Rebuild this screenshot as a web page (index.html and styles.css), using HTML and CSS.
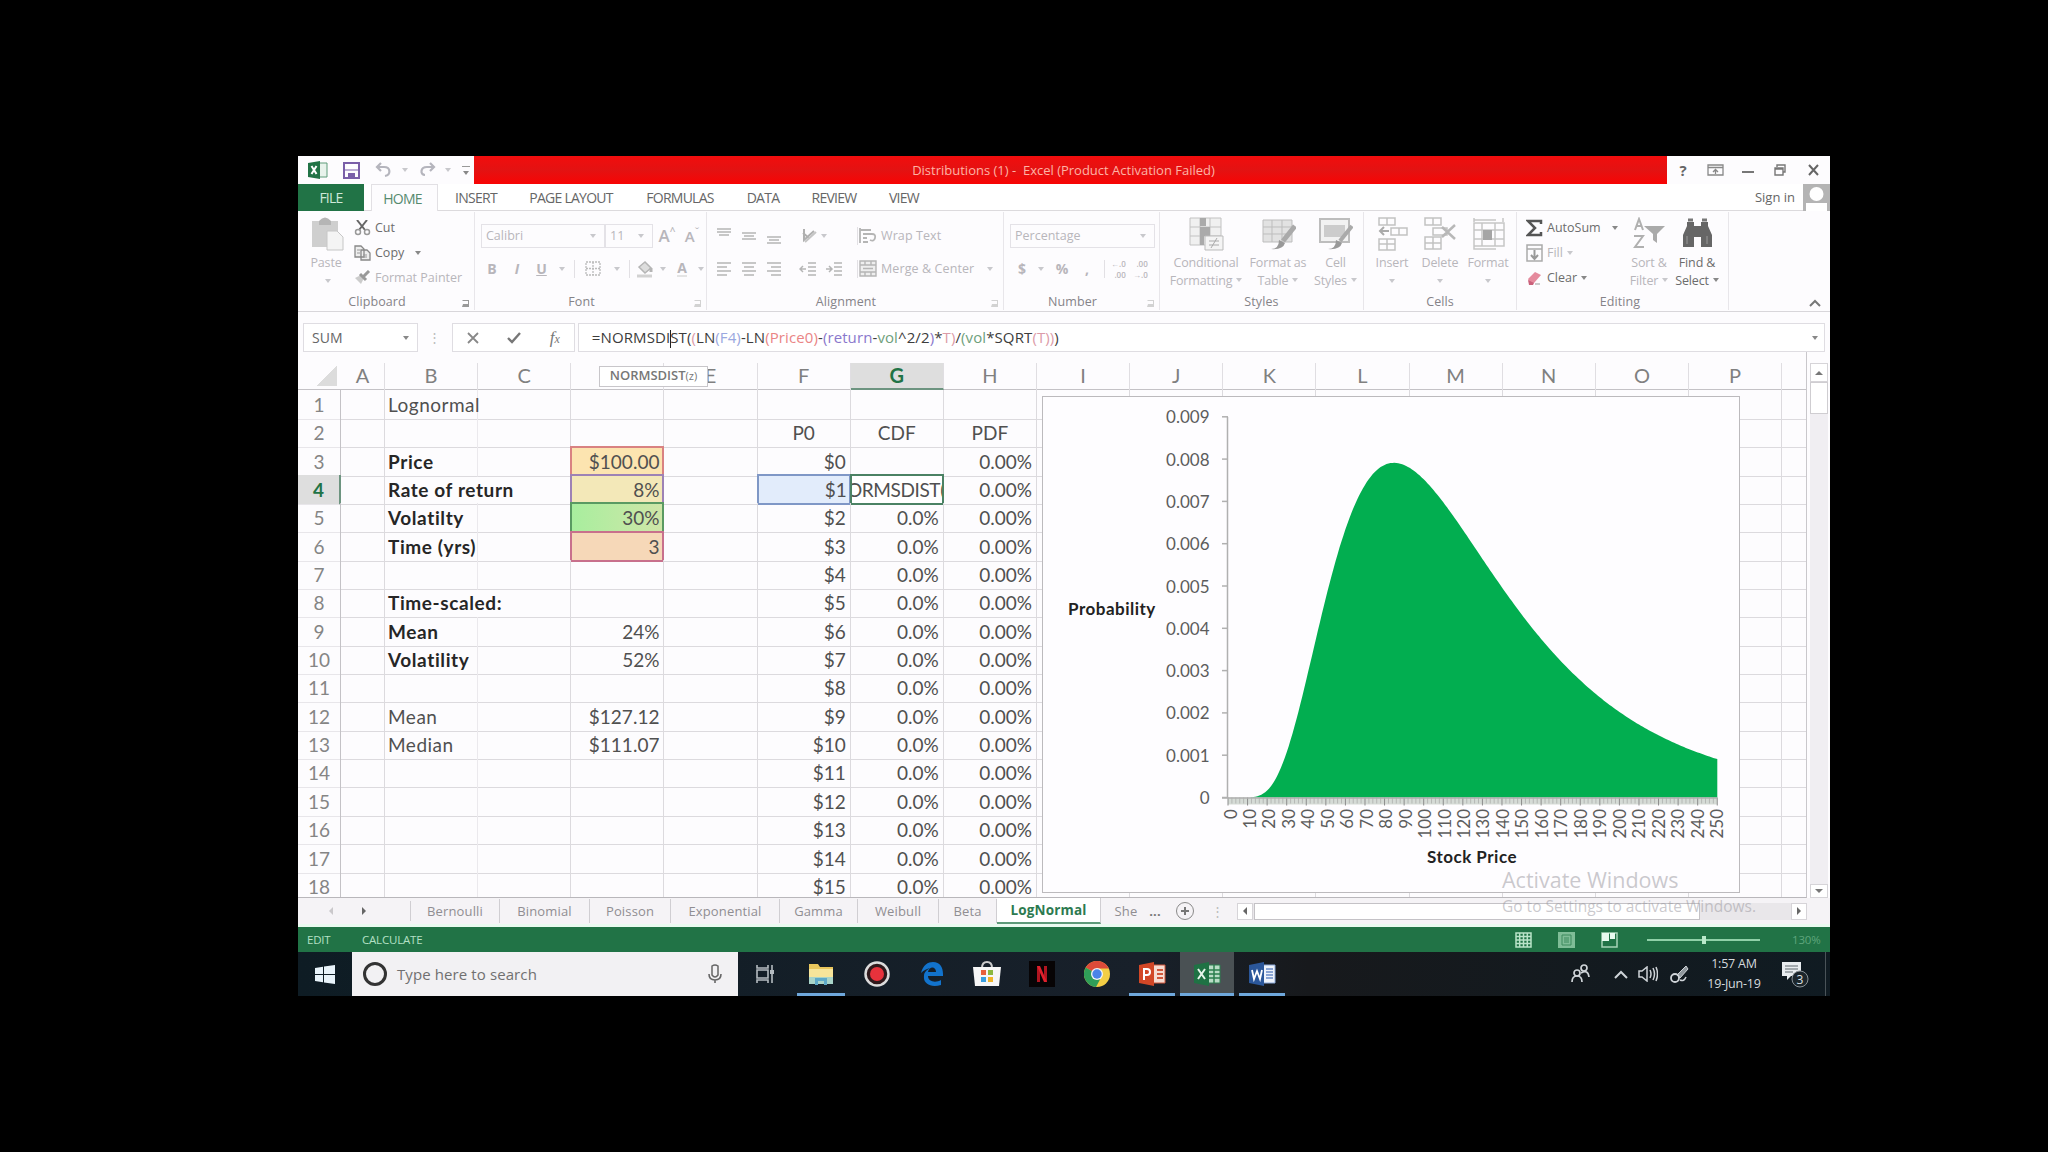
FILE: index.html
```html
<!DOCTYPE html>
<html lang="en">
<head>
    <meta charset="UTF-8">
    <title>Distributions (1) - Excel</title>
    <link rel="stylesheet" href="styles.css">
</head>
<body>

<div class="window">

    <div class="titlebar">
        <div class="quick">
            <svg width="20" height="18" viewBox="0 0 20 18"><path d="M12 2h7v14h-7" fill="#e8f3ec" stroke="#5f9c7b"/><path d="M0 2l12-2v18L0 16z" fill="#217346"/><path d="M3.500 5l5 8M8.500 5l-5 8" stroke="#fff" stroke-width="2"/></svg>
            <svg width="17" height="17" viewBox="0 0 17 17"><path d="M1 1h15v15H1z" fill="none" stroke="#7a5fa8" stroke-width="2"/><path d="M4 2h9v5H4z" fill="#fff"/><path d="M1 8h15" stroke="#7a5fa8"/><path d="M5 11h7v5H5z" fill="#7a5fa8"/></svg>
            <svg width="17" height="16" viewBox="0 0 17 16"><path d="M6 1L2 5l4 4M2 5h7c7 0 7 8 1 9" fill="none" stroke="#b5b5bd" stroke-width="2.200"/></svg>
            <i class="arrow pale"></i>
            <svg width="17" height="16" viewBox="0 0 17 16"><path d="M11 1l4 4-4 4M15 5H8c-7 0-7 8-2 8" fill="none" stroke="#b5b5bd" stroke-width="2.200"/></svg>
            <i class="arrow pale"></i>
            <span class="customize"><i class="arrow"></i></span>
        </div>
        <div class="title">Distributions (1) -&nbsp; Excel (Product Activation Failed)</div>
        <div class="controls">
            <b>?</b>
            <svg width="17" height="12" viewBox="0 0 17 12"><path d="M1 1h15v10H1zM1 3.500h15M8.500 10V5.500M6 8l2.500-2.500L11 8" fill="none" stroke="#888" stroke-width="1.300"/></svg>
            <svg width="12" height="12" viewBox="0 0 12 12"><path d="M0 8h12" stroke="#777" stroke-width="2"/></svg>
            <svg width="12" height="12" viewBox="0 0 12 12"><path d="M3 3V1h8v7H9M1 4h8v7H1zM1 5h8" fill="none" stroke="#777" stroke-width="1.400"/></svg>
            <svg width="11" height="12" viewBox="0 0 11 12"><path d="M1 1l9 10M10 1L1 11" stroke="#666" stroke-width="2"/></svg>
        </div>
    </div>

    <div class="menu">
        <span class="file">FILE</span>
        <span class="home">HOME</span>
        <span>INSERT</span>
        <span>PAGE LAYOUT</span>
        <span>FORMULAS</span>
        <span>DATA</span>
        <span>REVIEW</span>
        <span>VIEW</span>
        <span class="signin">Sign in</span>
        <svg class="avatar" width="27" height="27" viewBox="0 0 27 27"><path d="M0 0h27v27H0z" fill="#b4b4b4"/><circle cx="13.500" cy="10" r="7" fill="#fff"/><path d="M3 27v-8h21v8z" fill="#fff"/></svg>
    </div>

    <div class="ribbon">
        <div class="group clipboard">
            <div class="tools">
                <div class="big">
                    <svg width="33" height="34" viewBox="0 0 33 34"><path d="M1 4h26v26H1z" fill="#cfcfcf"/><path d="M8 4q6-7 12 0v4H8z" fill="#b5b5b5"/><path d="M16 14h10l6 6v13H16z" fill="#f4f4f4" stroke="#c6c6c6"/></svg>
                    <span>Paste</span><i class="arrow pale"></i>
                </div>
                <div class="stack">
                    <div class="dark"><svg width="17" height="16" viewBox="0 0 17 16"><path d="M3 0l8 10M13 0L5 10" stroke="#666" stroke-width="2"/><circle cx="4" cy="12" r="2.500" fill="none" stroke="#999" stroke-width="1.500"/><circle cx="13" cy="12" r="2.500" fill="none" stroke="#999" stroke-width="1.500"/></svg>Cut</div>
                    <div class="dark"><svg width="17" height="16" viewBox="0 0 17 16"><path d="M1 1h6l3 3v8H1zM7 5h6l3 3v7H7z" fill="#eee" stroke="#888" stroke-width="1.300"/><path d="M3 5h3M3 8h3M9 10h4M9 12h4" stroke="#999"/></svg>Copy<i class="arrow"></i></div>
                    <div><svg width="17" height="16" viewBox="0 0 17 16"><path d="M1 8l6 6 3-6-3-3z" fill="#ccc"/><path d="M8 8l7-7M6 4l6 6" stroke="#999" stroke-width="3"/></svg>Format Painter</div>
                </div>
            </div>
            <div class="name">Clipboard<i class="launch"></i></div>
        </div>

        <div class="group font">
            <div class="tools rows">
                <div class="line font-top">
                    <div class="combo">Calibri<i class="arrow pale"></i></div>
                    <div class="combo">11<i class="arrow pale"></i></div>
                    <span class="grow">A<sup>^</sup></span>
                    <span class="grow small">A<sup>&#711;</sup></span>
                </div>
                <div class="line font-bottom">
                    <b>B</b><b><em>I</em></b><b class="under">U</b><i class="arrow pale"></i><i class="sep"></i>
                    <svg width="16" height="15" viewBox="0 0 16 15"><path d="M1 1h14v13H1zM8 1v13M1 7.500h14" fill="none" stroke="#bbb" stroke-width="1.300" stroke-dasharray="2 1"/></svg>
                    <i class="arrow pale"></i><i class="sep"></i>
                    <svg width="18" height="18" viewBox="0 0 18 18"><path d="M3 7l6-5 6 6-6 5z" fill="#ddd" stroke="#b5b5b5" stroke-width="1.500"/><path d="M15 8v4" stroke="#b5b5b5" stroke-width="3"/><path d="M1 16h15" stroke="#d2d2d2" stroke-width="3"/></svg>
                    <i class="arrow pale"></i><b class="letter">A</b><i class="arrow pale"></i>
                </div>
            </div>
            <div class="name">Font<i class="launch pale"></i></div>
        </div>

        <div class="group alignment">
            <div class="tools rows">
                <div class="line align-top">
                    <svg width="16" height="16" viewBox="0 0 16 16"><path d="M1 1h14M1 4h14M3 7h10" stroke="#b5b5b5" stroke-width="1.500"/></svg>
                    <svg width="16" height="16" viewBox="0 0 16 16"><path d="M1 5h14M3 8h10M1 11h14" stroke="#b5b5b5" stroke-width="1.500"/></svg>
                    <svg width="16" height="16" viewBox="0 0 16 16"><path d="M1 9h14M3 12h10M1 15h14" stroke="#b5b5b5" stroke-width="1.500"/></svg>
                    <svg class="orient" width="17" height="17" viewBox="0 0 17 17"><path d="M3 2v11l10-9M2 6l6 5" fill="none" stroke="#b0b0b0" stroke-width="2"/><path d="M4 15L15 5" stroke="#c5c5c5" stroke-width="2"/></svg>
                    <i class="arrow pale"></i><i class="sep"></i>
                    <svg width="18" height="17" viewBox="0 0 18 17"><path d="M1 1v15M1 3h11M4 7h9q4 0 3 4t-5 2M4 11h4M4 15h5" fill="none" stroke="#b5b5b5" stroke-width="1.800"/></svg>
                    <span>Wrap Text</span>
                </div>
                <div class="line align-bottom">
                    <svg width="16" height="14" viewBox="0 0 16 14"><path d="M1 1h14M1 5h10M1 9h14M1 13h10" stroke="#b5b5b5" stroke-width="1.500"/></svg>
                    <svg width="16" height="14" viewBox="0 0 16 14"><path d="M1 1h14M3 5h10M1 9h14M3 13h10" stroke="#b5b5b5" stroke-width="1.500"/></svg>
                    <svg width="16" height="14" viewBox="0 0 16 14"><path d="M1 1h14M5 5h10M1 9h14M5 13h10" stroke="#b5b5b5" stroke-width="1.500"/></svg>
                    <svg width="18" height="14" viewBox="0 0 18 14"><path d="M1 7h6M4 4L1 7l3 3M9 1h8M9 5h8M9 9h8M9 13h8" fill="none" stroke="#b5b5b5" stroke-width="1.500"/></svg>
                    <svg width="18" height="14" viewBox="0 0 18 14"><path d="M1 7h6M4 4l3 3-3 3M9 1h8M9 5h8M9 9h8M9 13h8" fill="none" stroke="#b5b5b5" stroke-width="1.500"/></svg>
                    <i class="sep"></i>
                    <svg width="18" height="17" viewBox="0 0 18 17"><path d="M1 1h16v15H1zM1 5h16M1 12h16M6 1v4M12 1v4M6 12v4M12 12v4M4 8.500h10" fill="#eee" stroke="#b5b5b5" stroke-width="1.400"/></svg>
                    <span>Merge &amp; Center</span><i class="arrow pale"></i>
                </div>
            </div>
            <div class="name">Alignment<i class="launch pale"></i></div>
        </div>

        <div class="group number">
            <div class="tools rows">
                <div class="line number-top"><div class="combo">Percentage<i class="arrow pale"></i></div></div>
                <div class="line number-bottom">
                    <b>$</b><i class="arrow pale"></i><b>%</b><b>,</b><i class="sep"></i>
                    <span class="decimals"><i>&#8592;.0</i><i>.00</i></span><span class="decimals"><i>.00</i><i>&#8594;.0</i></span>
                </div>
            </div>
            <div class="name">Number<i class="launch pale"></i></div>
        </div>

        <div class="group styles">
            <div class="tools">
                <div class="big">
                    <svg width="35" height="34" viewBox="0 0 35 34"><path d="M1 1h31v27H1zM11 1v27M21 1v27M1 10h31M1 19h31" fill="#f0f0f0" stroke="#c2c2c2"/><path d="M11 1h6v8h-6zM11 10h10v9H11zM11 19h4v9h-4z" fill="#aaa"/><path d="M16 19h18v14H16z" fill="#f4f4f4" stroke="#bbb"/><path d="M20 24h10M20 28h10M28 21l-6 10" stroke="#aaa"/></svg>
                    <span>Conditional</span><span>Formatting<i class="arrow pale"></i></span>
                </div>
                <div class="big">
                    <svg width="35" height="34" viewBox="0 0 35 34"><path d="M2 3h29v22H2zM2 10h29M2 17h29M11 3v22M21 3v22" fill="#e2e2e2" stroke="#bdbdbd"/><path d="M34 9L22 24" stroke="#aaa" stroke-width="5"/><path d="M10 32q8 0 8-9l6 3q-2 7-14 6" fill="#999"/></svg>
                    <span>Format as</span><span>Table<i class="arrow pale"></i></span>
                </div>
                <div class="big">
                    <svg width="35" height="34" viewBox="0 0 35 34"><path d="M2 2h29v23H2z" fill="#f2f2f2" stroke="#bdbdbd" stroke-width="2"/><path d="M6 8h21v12H6z" fill="#ccc"/><path d="M34 9L22 24" stroke="#aaa" stroke-width="4"/><path d="M10 32q8 0 8-9l6 3q-2 7-14 6" fill="#999"/></svg>
                    <span>Cell</span><span>Styles<i class="arrow pale"></i></span>
                </div>
            </div>
            <div class="name">Styles</div>
        </div>

        <div class="group cells">
            <div class="tools">
                <div class="big">
                    <svg width="32" height="34" viewBox="0 0 32 34"><path d="M3 1h16v7H3zM11 1v7M3 22h16v11H3zM11 22v11M3 27h16M15 11h16v7H15zM23 11v7" fill="none" stroke="#c2c2c2" stroke-width="1.500"/><path d="M13 14H4M8 10l-4 4 4 4" fill="none" stroke="#aaa" stroke-width="2"/></svg>
                    <span>Insert</span><i class="arrow pale"></i>
                </div>
                <div class="big">
                    <svg width="34" height="34" viewBox="0 0 34 34"><path d="M2 1h16v7H2zM10 1v7M2 20h16v12H2zM10 20v12M2 26h16M10 11h14v7H10z" fill="none" stroke="#c2c2c2" stroke-width="1.500"/><path d="M19 10l13 12M32 8L19 20" stroke="#b8b8b8" stroke-width="2.500"/></svg>
                    <span>Delete</span><i class="arrow pale"></i>
                </div>
                <div class="big">
                    <svg width="33" height="34" viewBox="0 0 33 34"><path d="M2 1v4M31 1v4M2 3h22M2 6h30v23H2zM2 6v26h22M10 6v23M23 6v23M2 13h30M2 22h30" fill="none" stroke="#c6c6c6" stroke-width="1.500"/><path d="M11 13h9v10h-9z" fill="#a5a5a5"/></svg>
                    <span>Format</span><i class="arrow pale"></i>
                </div>
            </div>
            <div class="name">Cells</div>
        </div>

        <div class="group editing">
            <div class="tools">
                <div class="stack">
                    <div class="dark"><svg width="17" height="18" viewBox="0 0 17 18"><path d="M15 5V2H2l7 7-7 7h13v-3" fill="none" stroke="#555" stroke-width="2.500"/></svg>AutoSum<i class="arrow"></i></div>
                    <div><svg width="17" height="18" viewBox="0 0 17 18"><path d="M1 1h15v16H1zM1 5h15" fill="none" stroke="#aaa" stroke-width="1.500"/><path d="M8.500 6v8M5 11l3.500 4 3.500-4" fill="none" stroke="#999" stroke-width="2"/></svg>Fill<i class="arrow pale"></i></div>
                    <div class="dark"><svg width="17" height="16" viewBox="0 0 17 16"><path d="M2 9l7-7 6 3-7 8H4z" fill="#e58a9d"/><path d="M2 10l6 3-1 2H3z" fill="#c9607a"/><path d="M9 14h5" stroke="#999"/></svg>Clear<i class="arrow"></i></div>
                </div>
                <div class="big">
                    <svg width="34" height="34" viewBox="0 0 34 34"><path d="M3 13L7 2l4 11M4 9h6M2 19h9L3 30h9" fill="none" stroke="#b0b0b0" stroke-width="2"/><path d="M12 9h21l-8 8v9l-4-3v-6z" fill="#aaa"/></svg>
                    <span>Sort &amp;</span><span>Filter<i class="arrow pale"></i></span>
                </div>
                <div class="big dark">
                    <svg width="31" height="34" viewBox="0 0 31 34"><path d="M5 5h7v4h7V5h7v4l4 9v12H19V20h-7v10H1V18l4-9z" fill="#666"/><path d="M6 3h5M20 3h5" stroke="#777" stroke-width="3"/><path d="M5 19v8M25 19v8" stroke="#999"/></svg>
                    <span>Find &amp;</span><span>Select<i class="arrow"></i></span>
                </div>
            </div>
            <div class="name">Editing</div>
        </div>
        <svg class="collapse" width="12" height="8" viewBox="0 0 12 8"><path d="M1 7l5-5 5 5" fill="none" stroke="#777" stroke-width="2"/></svg>
    </div>

    <div class="formula-bar">
        <div class="box name-box">SUM<i class="arrow"></i></div>
        <span class="dots">&#8942;</span>
        <div class="box buttons">
            <svg width="12" height="12" viewBox="0 0 12 12"><path d="M1 1l10 10M11 1L1 11" stroke="#888" stroke-width="1.800"/></svg>
            <svg width="14" height="12" viewBox="0 0 14 12"><path d="M1 6l4 4 8-9" fill="none" stroke="#777" stroke-width="2.400"/></svg>
            <em>f<small>x</small></em>
        </div>
        <div class="box formula"><div class="text">=NORMSDI<i class="caret"></i>ST(<span class="pink">(</span>LN<span class="blue">(F4)</span>-LN<span class="red">(Price0)</span>-<span class="violet">(return</span>-<span class="green">vol</span>^2/2<span class="violet">)</span>*<span class="pink">T)</span>/<span class="green">(vol</span>*SQRT<span class="pink">(T))</span>)</div><i class="arrow"></i></div>
    </div>

    <div class="sheet">
        <div class="grid">
            <div class="columns" id="columns"></div>
            <div id="rows"></div>
            <div class="hint"><b>NORMSDIST</b>(z)</div>
            <svg class="chart" id="chart" width="698" height="497" viewBox="1042 396 698 497"></svg>
        </div>
        <div class="vscroll">
            <div class="step up"><i></i></div>
            <div class="thumb"></div>
            <div class="track"></div>
            <div class="step down"><i></i></div>
        </div>
    </div>

    <div class="tabs">
        <div class="nav"><i class="left"></i><i class="right"></i></div>
        <span>Bernoulli</span><span>Binomial</span><span>Poisson</span><span>Exponential</span>
        <span>Gamma</span><span>Weibull</span><span>Beta</span><span class="active">LogNormal</span>
        <span class="cut">She</span><b class="more">...</b>
        <svg width="20" height="20" viewBox="0 0 20 20"><circle cx="10" cy="10" r="8.500" fill="none" stroke="#8a8a8a"/><path d="M10 6v8M6 10h8" stroke="#777" stroke-width="2"/></svg>
        <span class="grip">&#8942;</span>
        <div class="hscroll">
            <div class="step"><i class="left"></i></div>
            <div class="thumb"></div>
            <div class="track"></div>
            <div class="step"><i class="right"></i></div>
        </div>
    </div>

    <div class="status">
        <span>EDIT</span><span>CALCULATE</span>
        <div class="views">
            <svg width="17" height="16" viewBox="0 0 17 16"><path d="M1 1h15v14H1zM4.700 1v14M8.500 1v14M12.300 1v14M1 4.500h15M1 8h15M1 11.500h15" fill="none" stroke="#b9e3c8" stroke-width="1.500"/></svg>
            <svg width="17" height="16" viewBox="0 0 17 16"><path d="M0 0h17v16H0z" fill="#7fbd97"/><path d="M4 3h9v10H4zM6 6h5M6 8h5M6 10h5" fill="none" stroke="#3c8a5c"/></svg>
            <svg width="17" height="16" viewBox="0 0 17 16"><path d="M1 1h15v14H1z" fill="none" stroke="#a6d4b7" stroke-width="1.500"/><path d="M1 1h7v8H1zM9 1h5v6H9z" fill="#e8fbef"/></svg>
        </div>
        <div class="zoom"><i></i></div>
        <span class="percent">130%</span>
    </div>

    <div class="taskbar">
        <div class="start"><svg width="20" height="19" viewBox="0 0 20 19"><path d="M0 3l8-1.200V9H0zM9 1.600L20 0v9H9zM0 10h8v7.200L0 16zM9 10h11v9L9 17.400z" fill="#e8f3fa"/></svg></div>
        <div class="search">
            <i class="cortana"></i>Type here to search
            <svg width="14" height="20" viewBox="0 0 14 20"><path d="M4 2q3-2 6 0v9q-3 4-6 0z" fill="none" stroke="#666" stroke-width="1.500"/><path d="M1 10q0 6 6 6t6-6M7 16v3" fill="none" stroke="#666" stroke-width="1.600"/></svg>
        </div>
        <div class="app"><svg width="20" height="18" viewBox="0 0 20 18"><path d="M2 5h11v8H2zM2 0v3h11V0M2 18v-3h11v3M17 0v5M17 9v9" fill="none" stroke="#b4bbc0" stroke-width="1.600"/><path d="M15 5h4v4h-4z" fill="#b4bbc0"/></svg></div>
        <div class="app open"><svg width="26" height="22" viewBox="0 0 26 22"><path d="M1 1h9l2 3h13v17H1z" fill="#e9c65c"/><path d="M1 6h24v15H1z" fill="#f7e59a"/><path d="M1 14h24v7H1z" fill="#a9d4c8"/><path d="M7 22v-7h12v7h-3v-4h-6v4z" fill="#5ea9c8"/></svg></div>
        <div class="app"><svg width="26" height="26" viewBox="0 0 26 26"><circle cx="13" cy="13" r="11.500" fill="#301a1c" stroke="#dcdcdc" stroke-width="2.500"/><circle cx="13" cy="13" r="7" fill="#e8323c"/></svg></div>
        <div class="app"><svg width="24" height="24" viewBox="0 0 24 24"><path d="M1 11C3 3 8 0 13 0c7 0 10 5 10 12v2H8c0 6 8 7 13 4v5C11 26 3 22 4 14c0-4 3-6 6-8-3 1-6 2-9 5zM8 10h8c0-6-7-6-8 0z" fill="#1273cc" fill-rule="evenodd"/></svg></div>
        <div class="app"><svg width="28" height="28" viewBox="0 0 28 28"><path d="M9 8q0-6 5-6t5 6" fill="none" stroke="#ccc" stroke-width="2"/><path d="M0 7h28l-2 19H2z" fill="#f6f6f6"/><path d="M8 10h5v5H8z" fill="#e8603c"/><path d="M15 10h5v5h-5z" fill="#8bb83f"/><path d="M8 17h5v5H8z" fill="#3a9fe0"/><path d="M15 17h5v5h-5z" fill="#f0b429"/></svg></div>
        <div class="app"><svg width="26" height="26" viewBox="0 0 26 26"><path d="M0 0h26v26H0z" fill="#070405"/><path d="M8 5h3v16H8zM15 5h3v16h-3z" fill="#b01520"/><path d="M8 5h3l7 16h-3z" fill="#e0202c"/></svg></div>
        <div class="app"><svg width="26" height="26" viewBox="0 0 26 26"><circle cx="13" cy="13" r="13" fill="#f3ce45"/><path d="M13 13L1.700 6.500A13 13 0 0 1 24.300 6.500L25 7.500H13z" fill="#dd4b3a"/><path d="M13 13L1.700 6.500A13 13 0 0 0 12 26l4-7.500z" fill="#2f9e58"/><circle cx="13" cy="13" r="6" fill="#f4f4f4"/><circle cx="13" cy="13" r="4.700" fill="#4a84e8"/></svg></div>
        <div class="app open"><svg width="27" height="24" viewBox="0 0 27 24"><path d="M14 3h12v18H14z" fill="#f6dcd2" stroke="#d0573a"/><path d="M18 8h6M18 12h6M18 16h6" stroke="#d0573a" stroke-width="2"/><path d="M0 3l15-3v24L0 21z" fill="#d24726"/><path d="M5 18V7h3q3 0 3 3t-3 3H5" fill="none" stroke="#fff" stroke-width="2"/></svg></div>
        <div class="app open current"><svg width="27" height="24" viewBox="0 0 27 24"><path d="M14 3h12v18H14z" fill="#b9dcc6" stroke="#2b7e4e"/><path d="M15 8h11M15 12h11M15 16h11M20 3v18" stroke="#2b7e4e" stroke-width="1.500"/><path d="M0 3l15-3v24L0 21z" fill="#1f7244"/><path d="M4 7l7 10M11 7L4 17" stroke="#e8f5ec" stroke-width="2"/></svg></div>
        <div class="app open"><svg width="27" height="24" viewBox="0 0 27 24"><path d="M14 3h12v18H14z" fill="#eef3fb" stroke="#8aa8d8"/><path d="M17 7h7M17 10h7M17 13h7M17 16h7" stroke="#6a8cc8" stroke-width="1.300"/><path d="M0 3l15-3v24L0 21z" fill="#2b579a"/><path d="M3 8l2 9 3-8 3 8 2-9" fill="none" stroke="#fff" stroke-width="1.800"/></svg></div>
        <div class="tray">
            <svg width="19" height="20" viewBox="0 0 19 20"><circle cx="6" cy="9" r="3" fill="none" stroke="#cfd4d8" stroke-width="1.700"/><path d="M1 18q0-6 5-6t5 6" fill="none" stroke="#cfd4d8" stroke-width="1.700"/><circle cx="13" cy="4" r="3" fill="none" stroke="#cfd4d8" stroke-width="1.700"/><path d="M10 9q7-4 8 4" fill="none" stroke="#cfd4d8" stroke-width="1.700"/></svg>
            <svg width="14" height="9" viewBox="0 0 14 9"><path d="M1 8l6-6 6 6" fill="none" stroke="#cfd4d8" stroke-width="2"/></svg>
            <svg width="20" height="16" viewBox="0 0 20 16"><path d="M1 5h3l5-4v14l-5-4H1zM12 4q2 4 0 8M15 2q3 6 0 12M18 1q3 7 0 14" fill="none" stroke="#cfd4d8" stroke-width="1.500"/></svg>
            <svg width="20" height="20" viewBox="0 0 20 20"><path d="M8 11L17 2l2 3-8 9z" fill="#8f979c" stroke="#cfd4d8"/><circle cx="6" cy="14" r="4" fill="none" stroke="#cfd4d8" stroke-width="1.800"/><path d="M11 16q4 2 6-3" fill="none" stroke="#cfd4d8" stroke-width="1.500"/></svg>
            <div class="clock">1:57 AM<br>19-Jun-19</div>
            <svg width="28" height="28" viewBox="0 0 28 28"><path d="M1 2h19v14H10l-4 4v-4H1z" fill="#e8ecef"/><path d="M4 6h13M4 9h13M4 12h8" stroke="#5d666c"/><circle cx="19" cy="19" r="8" fill="#1c262c" stroke="#8a9297"/><text x="19" y="24" text-anchor="middle" class="badge">3</text></svg>
            <i class="peek"></i>
        </div>
    </div>

    <div class="watermark">
        <div>Activate Windows</div>
        <p>Go to Settings to activate Windows.</p>
    </div>
</div>

<script>
    const letters = "ABCDEFGHIJKLMNOPQ".split("");

    const cells = {
        B1: "Lognormal", F2: "P0", G2: "CDF", H2: "PDF",
        B3: "Price", D3: "$100.00",
        B4: "Rate of return", D4: "8%", G4: "ORMSDIST(",
        B5: "Volatilty", D5: "30%",
        B6: "Time (yrs)", D6: "3",
        B8: "Time-scaled:",
        B9: "Mean", D9: "24%",
        B10: "Volatility", D10: "52%",
        B12: "Mean", D12: "$127.12",
        B13: "Median", D13: "$111.07"
    };
    for (let r = 3; r <= 18; r++) {
        cells["F" + r] = "$" + (r - 3);
        cells["H" + r] = "0.00%";
        if (r > 4) cells["G" + r] = "0.0%";
    }
    const bold = ["B3", "B4", "B5", "B6", "B8", "B9", "B10"];
    const marks = {D3: "ref-red", D4: "ref-violet", D5: "ref-green", D6: "ref-pink", F4: "ref-blue", G4: "editing-cell"};

    function renderSheet() {
        document.getElementById("columns").innerHTML = "<div class='corner'></div>" +
            letters.map(l => `<div class="${l === "G" ? "selected" : ""}">${l === "Q" ? "" : l}</div>`).join("");

        let html = "";
        for (let r = 1; r <= 18; r++) {
            html += `<div class="row"><div class="head ${r === 4 ? "selected" : ""}">${r}</div>`;
            letters.forEach(l => {
                const id = l + r;
                const cls = ["cell"];
                if (l === "B") cls.push("text");
                // labels in B run over into C
                if (l === "B" && (r === 4 || r === 8)) cls.push("spill");
                if (r === 2) cls.push("center");
                if (bold.includes(id)) cls.push("bold");
                if (l === "G") cls.push("cdf");
                if (marks[id]) cls.push(marks[id]);
                html += `<div class="${cls.join(" ")}"><span>${cells[id] || ""}</span></div>`;
            });
            html += "</div>";
        }
        document.getElementById("rows").innerHTML = html;
    }

    // lognormal density for price 100, return 8%, volatility 30%, 3 years
    function density(x) {
        const sigma = 0.3 * Math.sqrt(3);
        const mu = Math.log(100) + (0.08 - 0.045) * 3;
        const z = (Math.log(x) - mu) / sigma;
        return Math.exp(-z * z / 2) / (x * sigma * Math.sqrt(2 * Math.PI));
    }

    function renderChart() {
        const x0 = 1228, base = 797.5, sx = 1.957, sy = 42300;
        let d = `M${x0} ${base}`;
        for (let v = 1; v <= 250; v++) d += `L${(x0 + v * sx).toFixed(1)} ${(base - density(v) * sy).toFixed(1)}`;
        let s = `<rect x="1042.5" y="396.5" width="697" height="496" class="frame"/>`;
        s += `<rect x="${x0}" y="${base}" width="489" height="7" class="tickband"/>`;
        for (let v = 0; v <= 250; v += 2) {
            s += `<path d="M${x0 + v * sx} ${base}v${v % 10 ? 6 : 8}" class="tick ${v % 10 ? "minor" : ""}"/>`;
        }
        s += `<path d="${d}V${base}Z" class="area"/><path d="M1227.5 417V798M1222 ${base + 0.5}H1717" class="axis"/>`;
        for (let i = 0; i <= 9; i++) {
            const y = base - i * 42.3;
            s += `<path d="M1222 ${y}h6" class="axis"/>`;
            s += `<text x="1209.5" y="${y + 6.5}" text-anchor="end" class="label">${i ? "0.00" + i : "0"}</text>`;
        }
        for (let i = 0; i <= 25; i++) {
            s += `<text transform="translate(${1236.5 + i * 19.46} 809) rotate(-90)" text-anchor="end" class="label">${i * 10}</text>`;
        }
        s += `<text x="1068" y="615" class="axis-title">Probability</text>`;
        s += `<text x="1472" y="863" text-anchor="middle" class="axis-title">Stock Price</text>`;
        document.getElementById("chart").innerHTML = s;
    }

    renderSheet();
    renderChart();
</script>
</body>
</html>
```
FILE: styles.css
```css
* {
    box-sizing: border-box;
}

body {
    margin: 0;
    background: #000;
    font-family: "Open Sans", "Noto Sans", sans-serif;
    font-size: 13px;
    color: #666;
}

svg {
    display: block;
    flex: none;
}

.window {
    position: relative;
    display: flex;
    flex-direction: column;
    width: 1532px;
    height: 840px;
    margin: 156px 0 0 298px;
    background: #fdfcfe;
    overflow: hidden;
    white-space: nowrap;
}

.arrow {
    display: inline-block;
    width: 0;
    height: 0;
    border: 3px solid transparent;
    border-top: 4px solid #888;
    border-bottom: 0;
}

.arrow.pale {
    border-top-color: #c8c8cc;
}

.sep {
    width: 1px;
    height: 18px;
    background: #e2e0e4;
}

/* title bar */
.titlebar {
    display: flex;
    height: 28px;
    flex: none;
}

.quick {
    display: grid;
    grid-template-columns: 40px 26px 38px 6px 38px 4px 23.500px;
    width: 175.500px;
    align-items: center;
    justify-items: center;
}

.quick .customize {
    border-top: 1px solid #999;
    width: 8px;
    padding: 3px 1px 0;
    margin-left: 8px;
    line-height: 0;
}

.title {
    width: 1193px;
    height: 27.500px;
    background: linear-gradient(#f20d0d, #e31212 50%, #f80404);
    color: #ffb3a6;
    text-align: center;
    line-height: 29px;
    font-size: 13px;
    padding-right: 13px;
}

.controls {
    display: grid;
    grid-template-columns: 33px 32px 32px 33px 33px;
    align-items: center;
    justify-items: center;
    font-size: 15px;
}

/* menu */
.menu {
    display: grid;
    grid-template-columns: 66px 80px 64px 126px 92px 74px 68px 72px 855px 35px;
    height: 27px;
    flex: none;
    line-height: 27px;
    text-align: center;
    border-bottom: 1px solid #dcdadd;
    font-size: 14px;
    letter-spacing: -0.750px;
    background: #fff;
}

.menu .file {
    background: #217346;
    color: #cfe8d9;
}

.menu .home {
    margin: 0 6px 0 7px;
    padding-right: 4px;
    color: #568a6e;
    height: 27px;
    background: #fdfcfe;
    border: 1px solid #e2e0e4;
    border-bottom: 0;
}

.menu .signin {
    text-align: right;
    font-size: 13px;
    letter-spacing: 0;
    line-height: 26px;
}

.menu .avatar {
    justify-self: end;
}

/* ribbon */
.ribbon {
    display: flex;
    height: 101px;
    flex: none;
    border-bottom: 1px solid #d8d6da;
    color: #b8b6bb;
    font-size: 12.500px;
}

.dark {
    color: #6c6c6c;
}

.group {
    display: flex;
    flex-direction: column;
    border-right: 1px solid #e8e6ea;
    margin: 1px 0;
}

.clipboard { width: 177px; }
.font { width: 232px; }
.alignment { width: 297px; }
.number { width: 156px; }
.styles { width: 204px; }
.cells { width: 153px; }
.editing { width: 212px; }

.tools {
    display: flex;
    height: 82px;
}

.name {
    display: flex;
    justify-content: center;
    position: relative;
    height: 16px;
    line-height: 16px;
    padding-right: 18px;
    color: #858388;
    letter-spacing: 0.100px;
}

.styles .name, .cells .name {
    padding-right: 0;
}

.editing .name {
    padding-right: 5px;
}

.launch {
    position: absolute;
    right: 5px;
    top: 6px;
    width: 7px;
    height: 7px;
    border: 1.500px solid #999;
    border-left-color: transparent;
    border-bottom-width: 3px;
}

.launch.pale {
    border-color: #d2d2d2;
    border-left-color: transparent;
}

.big {
    display: flex;
    flex-direction: column;
    align-items: center;
    padding-top: 5px;
    line-height: 18px;
    letter-spacing: -0.150px;
}

.big svg {
    margin-bottom: 3px;
}

.big > .arrow {
    margin-top: 7px;
}

.big span .arrow {
    margin: 0 0 3px 4px;
}

.clipboard .big { width: 56px; padding-left: 3px; }
.clipboard .big span { margin-left: -3px; }
.styles .tools { padding-left: 8px; }
.styles .big:nth-child(1) { width: 76px; }
.styles .big:nth-child(2) { width: 68px; }
.styles .big:nth-child(3) { width: 47px; }
.cells .tools { padding-left: 4px; }
.cells .big { width: 48px; }
.editing .tools { padding-left: 9px; }
.editing .stack { width: 99px; }
.editing .big { width: 48px; }

.stack {
    padding-top: 3px;
}

.stack div {
    display: flex;
    align-items: center;
    height: 25px;
    gap: 4px;
}

.stack .arrow {
    margin-left: 7px;
}

.editing .stack .arrow {
    margin-left: 0;
}

.editing .stack div:first-child .arrow {
    margin-left: 7px;
}

.rows {
    flex-direction: column;
    padding-top: 11px;
}

.line {
    display: grid;
    align-items: center;
    justify-items: center;
    height: 25px;
    margin-bottom: 8px;
}

.line b {
    font-size: 14px;
}

.line > span {
    justify-self: start;
}

.under {
    text-decoration: underline;
}

.font-top { grid-template-columns: 124px 48px 28px 22px; padding-left: 6px; }
.font-bottom { grid-template-columns: 26px 24px 25px 15px 10px 28px 20px 5px 26px 10px 28px 10px; padding-left: 4px; }
.align-top { grid-template-columns: 25px 25px 25px 32px 12px 28px 20px 100px; padding-left: 4px; }
.align-bottom { grid-template-columns: 25px 25px 25px 44px 8px 20px 20px 100px 24px; padding-left: 4px; }
.number-top { grid-template-columns: 145px; padding-left: 6px; }
.number-bottom { grid-template-columns: 26px 12px 30px 20px 14px 22px 30px; padding-left: 5px; }

.alignment .sep, .orient {
    justify-self: end;
}

.alignment .line > span {
    margin-left: 3px;
    letter-spacing: 0.100px;
}

.combo {
    display: flex;
    align-items: center;
    justify-content: space-between;
    width: 100%;
    height: 24px;
    padding: 0 8px 0 4px;
    border: 1px solid #e4e2e7;
}

.line > .grow {
    font-size: 17px;
    font-weight: 600;
    line-height: 20px;
    justify-self: center;
}

.line > .grow.small {
    font-size: 15px;
}

.grow sup {
    font-size: 10px;
    line-height: 0;
}

.letter {
    border-bottom: 2px solid #e4e4e4;
    line-height: 15px;
}

.decimals {
    display: flex;
    flex-direction: column;
    font-size: 8px;
    line-height: 11px;
    font-weight: 600;
    text-align: right;
}

.decimals i {
    font-style: normal;
}

.collapse {
    align-self: flex-end;
    margin: 0 0 4px 80px;
}

/* formula bar */
.formula-bar {
    display: flex;
    height: 40px;
    flex: none;
    padding: 11px 5px 0;
}

.box {
    display: flex;
    align-items: center;
    height: 29px;
    border: 1px solid #dfdde2;
    background: #fff;
    font-size: 14px;
}

.name-box {
    width: 115px;
    padding: 0 8px;
    justify-content: space-between;
}

.dots {
    width: 34px;
    text-align: center;
    line-height: 28px;
    color: #bbb;
}

.buttons {
    width: 123px;
    padding: 0 14px;
    justify-content: space-between;
}

.buttons em {
    font-family: "Liberation Serif", serif;
    font-size: 17px;
    color: #777;
}

.buttons small {
    font-size: 12px;
}

.formula {
    width: 1248px;
    margin-left: 3px;
    padding: 0 6px 0 13px;
    justify-content: space-between;
    color: #3c3c3c;
    font-size: 15px;
    letter-spacing: 0.100px;
}

.caret {
    display: inline-block;
    width: 1px;
    height: 18px;
    margin-right: -1px;
    background: #222;
    vertical-align: middle;
}

.pink { color: #dc9ba8; }
.red { color: #ea8585; }
.blue { color: #9aa8e0; }
.violet { color: #8a78cc; }
.green { color: #6f9f7c; }

/* sheet */
.sheet {
    display: flex;
    height: 546px;
    flex: none;
    font-family: Lato, "Open Sans", sans-serif;
    font-size: 19px;
    color: #555;
}

.grid {
    position: relative;
    width: 1509px;
    overflow: hidden;
    border-right: 1px solid #c9c7cb;
    border-bottom: 1px solid #b9b7bb;
}

.columns, .row {
    display: grid;
    grid-template-columns: 43px 44px repeat(15, 93.150px) 26px;
}

.columns {
    height: 38px;
    padding-top: 11px;
    border-bottom: 1px solid #c4c2c6;
    text-align: center;
    line-height: 25px;
    color: #808080;
    font-size: 20px;
}

.columns div {
    border-right: 1px solid #e0dee2;
}

.columns .selected {
    background: #dedede;
    border-bottom: 2px solid #6d9480;
    color: #217346;
    font-weight: bold;
}

.columns .corner {
    background: linear-gradient(135deg, transparent 60%, #dcdcdc 60%);
    clip-path: inset(0 4px 4px 18px);
}

.row {
    height: 28.350px;
    line-height: 29px;
}

.head {
    text-align: center;
    border-right: 1px solid #c4c2c6;
    border-bottom: 1px solid #e8e6ea;
    color: #858585;
}

.head.selected {
    background: #dedede;
    color: #217346;
    font-weight: bold;
    border-right: 2px solid #6d9480;
}

.cell {
    display: flex;
    justify-content: flex-end;
    min-width: 0;
    padding-right: 4px;
    border-right: 1px solid #dcdade;
    border-bottom: 1px solid #dcdade;
    color: #505050;
}

.cell.text {
    justify-content: flex-start;
    padding-left: 3px;
    border-right-color: #ebe9ed;
    letter-spacing: 0.500px;
}

.cell.spill {
    border-right-color: transparent;
}

.cell.center {
    justify-content: center;
    padding: 0;
}

.cell.cdf {
    padding-right: 4px;
}

.cell.cdf.center {
    padding: 0;
}

.cell.bold {
    font-weight: bold;
    color: #262626;
    font-size: 19px;
    letter-spacing: 0.600px;
}

.ref-red, .ref-violet, .ref-green, .ref-pink {
    margin: -1px 0 0 -1px;
    border: 2px solid;
    padding-right: 3px;
    line-height: 27px;
}

.ref-red { border-color: #d98282; background: #fce4b0; }
.ref-violet { border-color: #9d82b5; background: #f3e8b8; }
.ref-green { border-color: #5a9a62; background: linear-gradient(90deg, #a8ee9e, #cfe6a8); }
.ref-pink { border-color: #c8708c; background: #f6d8b8; }

.ref-blue {
    margin: -1px 0 0 -1px;
    border: 2px solid #7f97c6;
    background: #e2ecfb;
    padding-right: 2px;
    line-height: 27px;
}

.cell.editing-cell {
    margin: -1px 0 0 -1px;
    padding: 0;
    border: 2px solid #4b8264;
    background: #fff;
    line-height: 27px;
    overflow: hidden;
    letter-spacing: -0.400px;
}

.editing-cell span {
    margin-right: -3px;
}

.hint {
    position: absolute;
    left: 301px;
    top: 14px;
    width: 109px;
    height: 21px;
    border: 1px solid #c8c6ca;
    background: #fff;
    text-align: center;
    font: 11px/17px "Open Sans", sans-serif;
    color: #777;
}

.hint b {
    font-size: 13px;
    font-weight: 600;
}

.chart {
    position: absolute;
    left: 744px;
    top: 44px;
}

.frame {
    fill: #fefdff;
    stroke: #bcbabd;
}

.area {
    fill: #02ae50;
}

.axis {
    fill: none;
    stroke: #b0b0b0;
    stroke-width: 1.500;
}

.tickband {
    fill: #d5dbd6;
}

.tick {
    stroke: #8c8c8c;
}

.tick.minor {
    stroke: #b5b8b5;
}

.label {
    font-size: 17px;
    fill: #5c5c5c;
}

.axis-title {
    font-size: 17px;
    letter-spacing: 0.500px;
    font-weight: bold;
    fill: #222;
}

.vscroll {
    display: flex;
    flex-direction: column;
    width: 18px;
    margin: 11px 0 0 3px;
}

.step {
    display: flex;
    align-items: center;
    justify-content: center;
    width: 18px;
    height: 19px;
    border: 1px solid #d6d4d8;
    background: #fff;
}

.step i, .nav i {
    border: 4px solid transparent;
}

.up i { border-bottom-color: #777; margin-top: -4px; }
.down i { border-top-color: #777; margin-top: 4px; }
.left { border-right-color: #666 !important; border-left: 0 !important; }
.right { border-left-color: #666 !important; border-right: 0 !important; }

.vscroll .thumb {
    height: 32px;
    border: 1px solid #cfcdd1;
    background: #fff;
}

.vscroll .track {
    flex: 1;
    background: #f0eef2;
}

.down {
    height: 14px;
}

/* sheet tabs */
.tabs {
    display: grid;
    grid-template-columns: 113px 89px 90px 81px 109px 78px 81px 58px 104px 44px 26px 28px 38px 576px;
    height: 29px;
    flex: none;
    background: #f5f3f6;
    border-bottom: 3px solid #eafaf0;
    align-items: center;
    text-align: center;
    font-size: 13px;
    letter-spacing: 0.150px;
    line-height: 24px;
    color: #908e92;
}

.tabs > span {
    border-right: 1px solid #d0ced2;
}

.tabs .nav {
    display: flex;
    justify-content: space-between;
    padding: 0 44px 0 31px;
    border-right: 1px solid #d0ced2;
    height: 20px;
    align-items: center;
}

.nav .left {
    opacity: 0.300;
}

.tabs .active {
    height: 26px;
    background: #fff;
    color: #2d7a50;
    font-size: 13.500px;
    font-weight: bold;
    border-bottom: 2px solid #5e9a7a;
}

.tabs .cut, .tabs .grip {
    border: 0;
}

.tabs .cut {
    padding-left: 6px;
}

.more {
    margin-left: -6px;
    color: #777;
}

.tabs .grip {
    color: #bbb;
}

.tabs > svg {
    justify-self: center;
}

.hscroll {
    display: flex;
    width: 570px;
    height: 17px;
    background: #e9e7ea;
}

.hscroll .step {
    width: 16px;
    height: 17px;
}

.hscroll .thumb {
    width: 446px;
    margin-left: 1px;
    border: 1px solid #c4c2c6;
    background: #fff;
}

.hscroll .track {
    flex: 1;
}

/* status bar */
.status {
    display: grid;
    grid-template-columns: 55px 1153px 132px 113px 30px;
    padding-left: 9px;
    height: 25px;
    flex: none;
    align-items: center;
    background: #217346;
    color: #b4e0c5;
    font-size: 11.500px;
    letter-spacing: -0.200px;
}

.views {
    display: flex;
    gap: 26px;
}

.zoom {
    display: flex;
    justify-content: center;
    align-items: center;
    height: 2px;
    background: #8fd0a8;
}

.zoom i {
    width: 4px;
    height: 8px;
    background: #b9e8ca;
}

.percent {
    padding-left: 32px;
    color: #5fa67d;
}

/* taskbar */
.taskbar {
    display: grid;
    grid-template-columns: 54px 386px 54px 58px 54px 56px 54px 56px 54px 56px 54px 56px 1fr;
    height: 44px;
    flex: none;
    background: linear-gradient(90deg, #0e1c24, #18202a 55%, #17191c 66%, #101b22);
}

.start, .app {
    display: flex;
    align-items: center;
    justify-content: center;
}

.open {
    box-shadow: inset 0 -3px #6fa8dc;
    margin: 0 5px;
}

.current {
    margin: 0;
    background: #4a5154;
}

.search {
    display: flex;
    align-items: center;
    background: #f2f1f3;
    padding: 0 16px 0 11px;
    font-size: 15px;
    letter-spacing: 0.100px;
    color: #707070;
}

.search svg {
    margin-left: auto;
}

.cortana {
    width: 24px;
    height: 24px;
    margin-right: 10px;
    border: 3px solid #333;
    border-radius: 50%;
}

.tray {
    display: grid;
    grid-template-columns: 60px 22px 32px 30px 80px 42px 14px;
    justify-content: end;
    align-items: center;
    justify-items: center;
}

.clock {
    color: #d5dade;
    font-size: 12.500px;
    line-height: 20px;
    text-align: center;
    letter-spacing: -0.200px;
}

.badge {
    font-size: 12px;
    fill: #dfe3e6;
}

.peek {
    width: 1px;
    height: 44px;
    background: #4a5358;
    justify-self: end;
    margin-right: 4px;
}

.watermark {
    position: absolute;
    left: 1204px;
    top: 708px;
    color: rgba(150, 148, 155, 0.500);
    font-size: 21.500px;
    line-height: 32px;
}

.watermark p {
    margin: 0;
    font-size: 15.500px;
    line-height: 20px;
}
```
